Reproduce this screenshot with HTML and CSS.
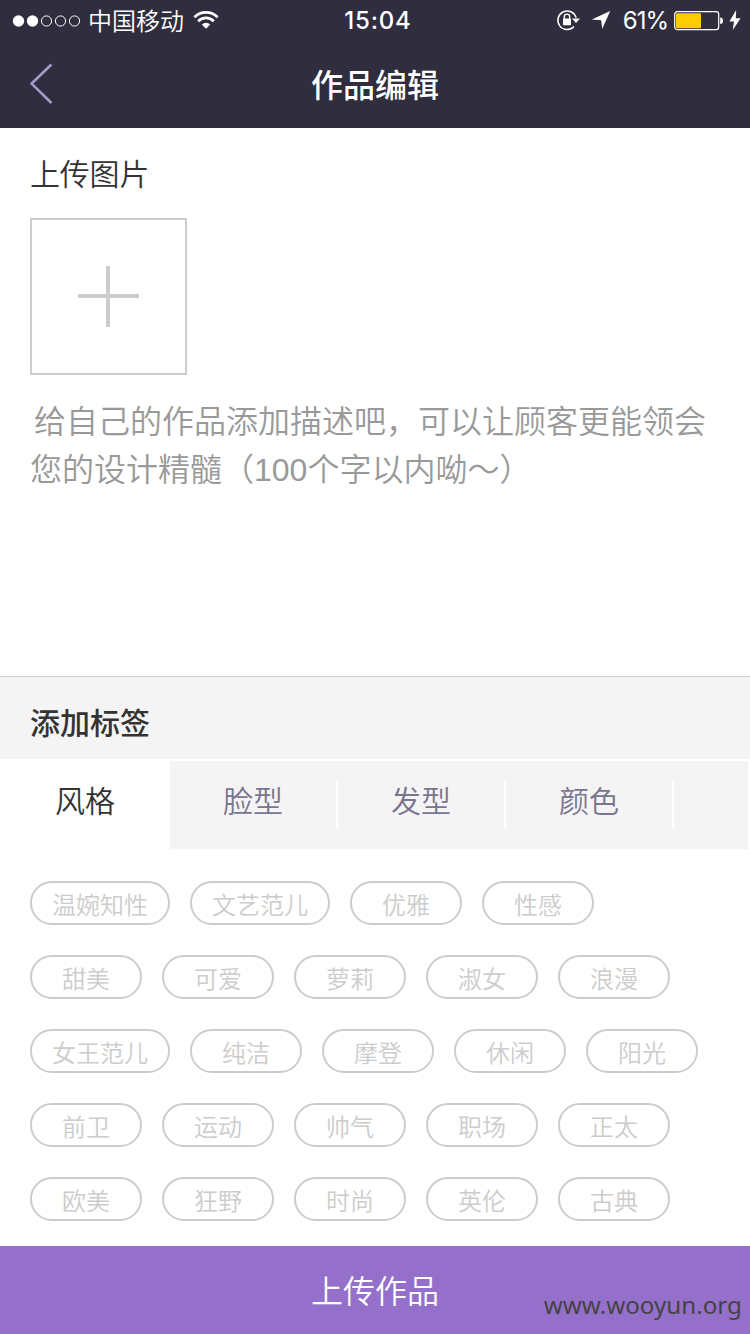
FILE: index.html
```html
<!DOCTYPE html>
<html lang="zh-CN">
<head>
    <meta charset="UTF-8">
    <meta name="viewport" content="width=device-width, initial-scale=1.0">
    <title>作品编辑</title>
    <link rel="stylesheet" href="styles.css">
</head>
<body>
    <header class="header">
        <div class="status-bar">
            <div class="status-left">
                <svg class="signal" width="70" height="14" viewBox="0 0 70 14">
                    <circle cx="6.5" cy="7" r="5.7" fill="#fff"/>
                    <circle cx="20.5" cy="7" r="5.7" fill="#fff"/>
                    <circle cx="34.5" cy="7" r="5.1" fill="none" stroke="#fff"/>
                    <circle cx="48.5" cy="7" r="5.1" fill="none" stroke="#fff"/>
                    <circle cx="62.5" cy="7" r="5.1" fill="none" stroke="#fff"/>
                </svg>
                <span class="carrier">中国移动</span>
                <svg class="wifi" width="26" height="20" viewBox="0 0 26 20">
                    <path d="M1.4 7.2A16.4 16.4 0 0 1 24.6 7.2" fill="none" stroke="#fff" stroke-width="2.8"/>
                    <path d="M5.2 11.2A11 11 0 0 1 20.8 11.2" fill="none" stroke="#fff" stroke-width="2.7"/>
                    <path d="M8.8 14.6A6.5 6.5 0 0 1 17.2 14.6L13 18.8Z" fill="#fff"/>
                </svg>
            </div>
            <div class="time">15:04</div>
            <div class="status-right">
                <svg class="lock" width="25" height="22" viewBox="0 0 25 22">
                    <path d="M20.1 8.6A9.3 9.3 0 1 0 18 17.6" fill="none" stroke="#fff" stroke-width="1.5"/>
                    <path d="M16 9.6H24L20 14Z" fill="#fff"/>
                    <path d="M8.3 10.4V7.8A2.7 2.7 0 0 1 13.7 7.8V10.4" fill="none" stroke="#fff" stroke-width="1.4"/>
                    <rect x="7" y="9.6" width="8" height="6.6" rx=".6" fill="#fff"/>
                </svg>
                <svg class="location" width="20" height="20" viewBox="0 0 20 20">
                    <path d="M19.2 1L11.2 19L10.2 10.2L.8 9.4Z" fill="#fff"/>
                </svg>
                <span class="percent">61%</span>
                <svg class="battery" width="50" height="20" viewBox="0 0 50 20">
                    <rect x=".7" y=".7" width="44" height="18" rx="2.6" fill="none" stroke="#fff" stroke-width="1.2"/>
                    <rect x="2" y="2.2" width="25" height="15" rx="1" fill="#ffcc00"/>
                    <path d="M46.2 6.5C48 6.5 49 7.3 49 9.7S48 12.9 46.2 12.9Z" fill="#fff"/>
                </svg>
                <svg class="bolt" width="12" height="20" viewBox="0 0 12 20">
                    <path d="M7.2 0L.4 11.4H5L3.8 20L11.6 8.2H6.8Z" fill="#fff"/>
                </svg>
            </div>
        </div>
        <div class="nav">
            <svg class="back" width="26" height="42" viewBox="0 0 26 42">
                <path d="M21.4 1.5L1.6 20.6L21.4 40" fill="none" stroke="#a39bc9" stroke-width="2.6"/>
            </svg>
            <h1>作品编辑</h1>
        </div>
    </header>

    <section class="upload">
        <h2>上传图片</h2>
        <div class="add-photo">
            <svg width="61" height="61" viewBox="0 0 61 61">
                <path d="M0 30H61M30 0V61" stroke="#ccc" stroke-width="4"/>
            </svg>
        </div>
        <p class="description">给自己的作品添加描述吧，可以让顾客更能领会您的设计精髓（100个字以内呦～）</p>
    </section>

    <section class="labels">
        <h2 class="labels-title">添加标签</h2>
        <div class="tabs">
            <div class="tab active">风格</div>
            <div class="tab">脸型</div>
            <div class="tab">发型</div>
            <div class="tab">颜色</div>
            <div class="tab-rest"></div>
        </div>
        <div class="tags">
            <span class="tag">温婉知性</span>
            <span class="tag">文艺范儿</span>
            <span class="tag">优雅</span>
            <span class="tag">性感</span>
            <span class="tag">甜美</span>
            <span class="tag">可爱</span>
            <span class="tag">萝莉</span>
            <span class="tag">淑女</span>
            <span class="tag">浪漫</span>
            <span class="tag">女王范儿</span>
            <span class="tag">纯洁</span>
            <span class="tag">摩登</span>
            <span class="tag">休闲</span>
            <span class="tag">阳光</span>
            <span class="tag">前卫</span>
            <span class="tag">运动</span>
            <span class="tag">帅气</span>
            <span class="tag">职场</span>
            <span class="tag">正太</span>
            <span class="tag">欧美</span>
            <span class="tag">狂野</span>
            <span class="tag">时尚</span>
            <span class="tag">英伦</span>
            <span class="tag">古典</span>
        </div>
    </section>

    <footer class="submit">
        上传作品
        <span class="watermark">www.wooyun.org</span>
    </footer>
</body>
</html>
```
FILE: styles.css
```css
* {
    box-sizing: border-box;
}

body {
    display: flex;
    flex-direction: column;
    width: 750px;
    height: 1334px;
    margin: 0;
    overflow: hidden;
    background-color: #fff;
    color: #333;
    font-family: "Liberation Sans", "Noto Sans CJK SC", sans-serif;
    font-weight: 350;
}

h1, h2, p {
    margin: 0;
}

svg {
    display: block;
    flex: none;
}

.header {
    height: 128px;
    background-color: #302d3f;
    color: #fff;
}

.status-bar {
    display: grid;
    grid-template-columns: 1fr auto 1fr;
    align-items: center;
    height: 40px;
    padding: 0 9px 0 12px;
}

.status-left, .status-right {
    display: flex;
    align-items: center;
}

.status-right {
    justify-content: flex-end;
}

.carrier {
    margin: 0 9px 0 6px;
    padding-top: 3px;
    font-size: 24px;
    line-height: 37px;
}

.time {
    padding: 2px 0 0 3px;
    font-family: Inter, sans-serif;
    font-size: 24px;
    font-weight: 500;
    letter-spacing: 0.8px;
    line-height: 38px;
}

.location {
    margin: 0 12px 0 10px;
}

.percent {
    padding-top: 2px;
    font-family: Inter, sans-serif;
    font-size: 24px;
    font-weight: 400;
    letter-spacing: -1px;
    line-height: 38px;
}

.signal, .battery {
    margin-top: 1px;
}

.battery {
    margin-right: 5px;
    margin-left: 6px;
}

.nav {
    display: grid;
    grid-template-columns: 1fr auto 1fr;
    align-items: center;
    height: 88px;
    padding: 0 30px;
}

.nav h1 {
    padding-top: 4px;
    font-size: 32px;
    font-weight: 500;
    line-height: 84px;
}

.upload {
    height: 548px;
    padding: 23px 30px 0;
}

.upload h2 {
    font-size: 30px;
    font-weight: 350;
    letter-spacing: -0.2px;
    line-height: 48px;
}

.add-photo {
    display: flex;
    align-items: center;
    justify-content: center;
    width: 157px;
    height: 157px;
    margin: 19px 0 23px;
    border: 2px solid #ccc;
}

.description {
    margin-right: -10px;
    color: #999;
    font-size: 32px;
    line-height: 48px;
    text-indent: 4px;
}

.labels-title {
    height: 83px;
    padding-left: 30px;
    border-top: 1px solid #ccc;
    background-color: #f4f4f4;
    font-size: 30px;
    font-weight: 500;
    line-height: 93px;
}

.tabs {
    display: flex;
    height: 90px;
    padding: 2px 2px 0;
}

.tab {
    display: flex;
    flex: none;
    width: 168px;
    padding-left: 53px;
    background-color: #f4f4f4;
    color: #7a748f;
    font-size: 30px;
    line-height: 82px;
}

.tab::after {
    content: "";
    width: 2px;
    height: 48px;
    margin: 20px 0 0 auto;
    background-color: #fff;
}

.tab.active {
    background-color: #fff;
    color: #333;
}

.tab-rest {
    flex: 1;
    background-color: #f4f4f4;
}

.tags {
    display: flex;
    flex-wrap: wrap;
    gap: 30px 20px;
    padding: 32px 30px 25px;
}

.tag {
    min-width: 112px;
    height: 44px;
    padding: 0 20px;
    border: 2px solid #ccc;
    border-radius: 22px;
    color: #ccc;
    font-size: 24px;
    line-height: 46px;
    text-align: center;
}

.submit {
    position: relative;
    height: 88px;
    background-color: #9570ca;
    color: #fff;
    font-size: 32px;
    line-height: 93px;
    text-align: center;
}

.watermark {
    position: absolute;
    right: 8px;
    bottom: 12px;
    color: #444;
    font-family: "Noto Sans", "Open Sans", sans-serif;
    font-size: 24.2px;
    font-weight: 400;
    line-height: 34px;
}
```
